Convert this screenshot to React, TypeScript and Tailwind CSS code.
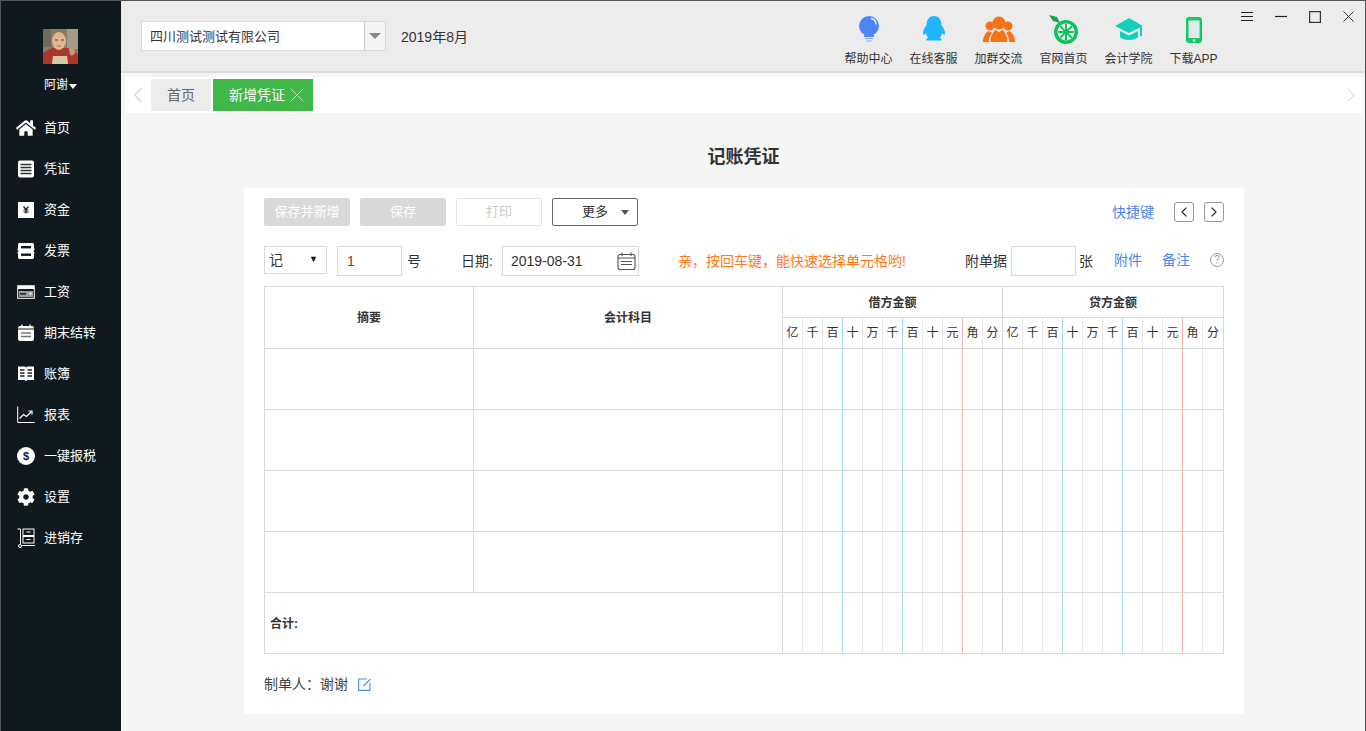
import { ChevronLeft, ChevronRight, X } from "lucide-react";
import { FaHome, FaCog } from "react-icons/fa";

const font = { fontFamily: '"Liberation Sans", "Noto Sans CJK SC", sans-serif' };

function Avatar() {
  return (
    <svg width="35" height="35" viewBox="0 0 35 35" className="block">
      <rect width="35" height="35" fill="#8a7a68" />
      <rect x="24" width="11" height="20" fill="#a49a8c" />
      <rect width="8" height="18" fill="#6e6a60" />
      <path d="M0 35V24l9-5h16l10 6v10z" fill="#a8392a" />
      <path d="M10 27h14l1 8H9z" fill="#d8c9a8" />
      <ellipse cx="16" cy="12" rx="7" ry="9" fill="#e2b595" />
      <path d="M26 20c3-2 6 0 6 3s-3 4-5 3z" fill="#c99678" />
      <path d="M12 11h3M18 11h3" stroke="#5a4030" strokeWidth="1" />
      <path d="M14 17h4" stroke="#a07058" strokeWidth="1" />
    </svg>
  );
}

const S = { width: 18, height: 18, viewBox: "0 0 18 18" };

const navIcons = {
  home: <FaHome size={20} color="#fff" className="shrink-0" />,
  voucher: (
    <svg {...S}>
      <rect x="1" y="0.5" width="16" height="17" rx="2" fill="#fff" />
      <path d="M3.5 4.5h11M3.5 7.5h11M3.5 10.5h11M3.5 13.5h11" stroke="#333" strokeWidth="1.6" />
    </svg>
  ),
  money: (
    <svg {...S}>
      <rect x="1" y="1" width="16" height="16" fill="#fff" />
      <path d="M6.5 5.5L9 8.5l2.5-3M6.5 9h5M6.5 11h5M9 8.5v4" stroke="#222" strokeWidth="1.2" fill="none" />
    </svg>
  ),
  invoice: (
    <svg {...S}>
      <path d="M2 1h14a2 2 0 0 1 1 2v3a2 2 0 0 1-1 3 2 2 0 0 1 1 3v3a2 2 0 0 1-1 2H2a2 2 0 0 1-1-2v-3a2 2 0 0 1 1-3 2 2 0 0 1-1-3V3a2 2 0 0 1 1-2z" fill="#fff" />
      <rect x="4" y="4" width="10" height="2.4" fill="#101a1e" />
      <rect x="4" y="11.5" width="10" height="2.4" fill="#101a1e" />
    </svg>
  ),
  salary: (
    <svg {...S}>
      <rect x="0.7" y="2.7" width="16.6" height="12.6" fill="none" stroke="#fff" strokeWidth="1" />
      <rect x="1" y="3" width="16" height="3" fill="#fff" />
      <rect x="2" y="8" width="14" height="6" fill="#9aa0a2" />
      <rect x="3" y="10" width="6" height="1.6" fill="#222" />
      <rect x="12.5" y="9.5" width="2" height="2" fill="#fff" />
    </svg>
  ),
  closing: (
    <svg {...S}>
      <rect x="1" y="2" width="16" height="15" rx="2" fill="#fff" />
      <path d="M5 0.500v3M13 0.500v3" stroke="#fff" strokeWidth="1.4" />
      <path d="M1 5h16" stroke="#101a1e" strokeWidth="1" />
      <path d="M4 9h10M4 12.500h10" stroke="#777" strokeWidth="1.6" />
    </svg>
  ),
  books: (
    <svg {...S}>
      <path d="M1 1.500h7l1 1 1-1h7v13.500h-7l-1 1.500-1-1.500H1z" fill="#fff" />
      <path d="M3 5h4.500M3 8h4.500M3 11h4.500M10.500 5H15M10.500 8H15M10.500 11H15" stroke="#222" strokeWidth="1.3" />
    </svg>
  ),
  report: (
    <svg {...S} fill="none">
      <path d="M0.700 0.500v16h17" stroke="#fff" strokeWidth="1" />
      <path d="M2.500 12.500l4-4 3 2 5-5" stroke="#fff" strokeWidth="1.2" />
      <path d="M11.500 5h3.500v3.500" stroke="#fff" strokeWidth="1.2" />
    </svg>
  ),
  tax: (
    <svg {...S}>
      <circle cx="9" cy="9" r="9" fill="#fff" />
      <text x="9" y="13" textAnchor="middle" fontSize="11" fontWeight="700" fill="#222" style={font}>$</text>
    </svg>
  ),
  settings: <FaCog size={18} color="#fff" className="shrink-0" />,
  stock: (
    <svg width="18" height="20" viewBox="0 0 18 20" fill="none" stroke="#fff" strokeWidth="1" className="shrink-0">
      <path d="M0.500 1h3v15.500" />
      <rect x="6" y="1" width="11" height="6.500" />
      <rect x="6" y="8.500" width="11" height="6.500" />
      <path d="M9.500 4h4M9.500 11.500h4" />
      <path d="M5 17.500h13" />
      <circle cx="3" cy="18" r="1.500" />
    </svg>
  ),
};

const navItems = [
  { label: "首页", icon: navIcons.home },
  { label: "凭证", icon: navIcons.voucher },
  { label: "资金", icon: navIcons.money },
  { label: "发票", icon: navIcons.invoice },
  { label: "工资", icon: navIcons.salary },
  { label: "期末结转", icon: navIcons.closing },
  { label: "账簿", icon: navIcons.books },
  { label: "报表", icon: navIcons.report },
  { label: "一键报税", icon: navIcons.tax },
  { label: "设置", icon: navIcons.settings },
  { label: "进销存", icon: navIcons.stock },
];

const I = { width: 32, height: 30, viewBox: "0 0 32 30" };

const topLinks = [
  {
    label: "帮助中心",
    icon: (
      <svg {...I}>
        <circle cx="16" cy="11" r="10" fill="#4f86f7" />
        <path d="M18 3.500c3 .6 5 3 5 6" stroke="#fff" strokeWidth="1.4" fill="none" opacity="0.85" />
        <path d="M11 20h10v2H11z" fill="#4f86f7" />
        <path d="M12 23.500h8M13.500 26h5" stroke="#7aa5f8" strokeWidth="1.2" />
      </svg>
    ),
  },
  {
    label: "在线客服",
    icon: (
      <svg {...I}>
        <path d="M16 1c5 0 7.500 4 7.500 9 2 3 4 6 3.500 9-.5 1.500-2 .5-3-1-.3 2-1 3.500-2.500 4.500 1.500.5 2.500 1.500 2 3H8.500c-.5-1.500.5-2.500 2-3C9 21.500 8.300 20 8 18c-1 1.500-2.500 2.500-3 1-.5-3 1.500-6 3.500-9C8.500 5 11 1 16 1z" fill="#1eb6ff" />
      </svg>
    ),
  },
  {
    label: "加群交流",
    icon: (
      <svg {...I}>
        <circle cx="16" cy="8" r="6.500" fill="#f97316" />
        <circle cx="7" cy="11" r="4.500" fill="#f97316" />
        <circle cx="25" cy="11" r="4.500" fill="#f97316" />
        <path d="M0 27c0-6 3-10 6-11l3 2c-2 2-3 5-3 9z" fill="#f97316" />
        <path d="M32 27c0-6-3-10-6-11l-3 2c2 2 3 5 3 9z" fill="#f97316" />
        <path d="M7.500 27c0-6 3-11 5-12l3.500 2 3.500-2c2 1 5 6 5 12z" fill="#f97316" />
      </svg>
    ),
  },
  {
    label: "官网首页",
    icon: (
      <svg {...I}>
        <path d="M1 0l8 2 3 6-7-2z" fill="#16a34a" />
        <circle cx="18" cy="17" r="12" fill="#0fc25c" />
        <circle cx="18" cy="17" r="8.500" fill="#fff" />
        <path d="M18 9v16M10 17h16M12.300 11.300l11.400 11.400M23.700 11.300L12.300 22.700" stroke="#0fc25c" strokeWidth="2" />
      </svg>
    ),
  },
  {
    label: "会计学院",
    icon: (
      <svg {...I}>
        <path d="M16 3L2 11l14 7 14-7z" fill="#14d0bb" />
        <path d="M7 16v6c3 4 15 4 18 0v-6l-9 4.500z" fill="#14d0bb" />
        <path d="M28 12v9" stroke="#14d0bb" strokeWidth="2" />
      </svg>
    ),
  },
  {
    label: "下载APP",
    icon: (
      <svg {...I}>
        <rect x="8" y="2" width="16" height="26" rx="3" fill="#12c869" />
        <rect x="10.500" y="5.500" width="11" height="17.500" fill="#ececec" />
        <rect x="10.500" y="5.500" width="11" height="17.500" fill="#bdf0d4" opacity="0.3" />
        <circle cx="16" cy="25.500" r="1.200" fill="#fff" />
      </svg>
    ),
  },
];

const digits = ["亿", "千", "百", "十", "万", "千", "百", "十", "元", "角", "分"];

// 金额格的竖线颜色：百/千后为蓝，元后为红
function lineClass(i: number) {
  if (i === 2 || i === 5) return "border-r-[#a6d8f7]";
  if (i === 8) return "border-r-[#f3b4b4]";
  if (i === 10) return "border-r-[#d9d9d9]";
  return "border-r-[#e8e8e8]";
}

function AmountCells({ head }: { head?: boolean }) {
  const cols = [...digits, ...digits];
  return (
    <>
      {cols.map((d, i) => (
        <div
          key={i}
          className={`flex items-center justify-center border-r last:border-r-0 ${lineClass(i % 11)} ${head ? "text-[12px] text-[#333]" : ""}`}
        >
          {head ? d : null}
        </div>
      ))}
    </>
  );
}

function CalendarIcon() {
  return (
    <svg width="19" height="19" viewBox="0 0 19 19" fill="none" stroke="#555" strokeWidth="1.100">
      <rect x="1" y="2.500" width="17" height="15" rx="2" />
      <path d="M5 0.500v3.500M14 0.500v3.500M1 6h17M4 9.500h11M4 12.500h11" />
    </svg>
  );
}

function EditIcon() {
  return (
    <svg width="13" height="13" viewBox="0 0 13 13" fill="none" stroke="#4a90e8" strokeWidth="1.100" className="ml-[10px]">
      <path d="M9 1H0.600v11.400H12V4.500" />
      <path d="M5.500 8L12.500 1" />
    </svg>
  );
}

function WindowControls() {
  return (
    <div className="ml-[15px] flex gap-[22px] pr-[10px] pt-[10px]">
      <svg width="12" height="12" viewBox="0 0 12 12" stroke="#222" strokeWidth="1.200">
        <path d="M0 1.500h12M0 5.500h12M0 9.500h12" />
      </svg>
      <svg width="12" height="12" viewBox="0 0 12 12" stroke="#222" strokeWidth="1.200">
        <path d="M0 5.500h12" />
      </svg>
      <svg width="12" height="12" viewBox="0 0 12 12" fill="none" stroke="#333" strokeWidth="1.200">
        <rect x="0.600" y="0.600" width="10.800" height="10.800" />
      </svg>
      <svg width="12" height="12" viewBox="0 0 12 12" stroke="#333" strokeWidth="1">
        <path d="M0.500 0.500l10 10M10.500 0.500l-10 10" />
      </svg>
    </div>
  );
}

export default function App() {
  const rowGrid = "grid grid-cols-[209px_309px_repeat(22,20px)]";
  return (
    <div style={font} className="flex h-[731px] w-[1366px] overflow-hidden border-x border-t border-[#555] bg-[#f5f5f5] text-[13px] text-[#333]">
      {/* Sidebar */}
      <aside className="flex w-[120px] shrink-0 flex-col bg-[#101a1e] text-white">
        <div className="flex flex-col items-center pt-[28px]">
          <div className="ml-[-1px]">
            <Avatar />
          </div>
          <div className="ml-[-1px] mt-[10px] flex h-[22px] items-center text-[12px] leading-none">
            阿谢
            <span className="ml-[1px] mt-[3px] h-0 w-0 border-x-[4.500px] border-t-[5px] border-x-transparent border-t-white" />
          </div>
        </div>
        <nav className="mt-[11px]">
          {navItems.map((it) => (
            <div key={it.label} className="flex h-[41px] items-center pl-[16px]">
              <span className="flex w-[18px] items-center justify-center">{it.icon}</span>
              <span className="ml-[9px]">{it.label}</span>
            </div>
          ))}
        </nav>
      </aside>

      <div className="flex min-w-0 flex-1 flex-col">
        {/* Top bar */}
        <header className="flex h-[72px] shrink-0 border-b-2 border-[#dcdcdc] bg-[#ececec]">
          <div className="flex items-start pl-[20px] pt-[20px]">
            <div className="flex h-[30px] w-[245px] border border-[#d9d9d9] bg-white">
              <div className="flex flex-1 items-center pl-[8px] pt-[2px] text-[#333]">四川测试测试有限公司</div>
              <div className="flex w-[21px] items-center justify-center border-l border-[#c9c9c9] bg-[#f5f5f5]">
                <span className="h-0 w-0 border-x-[6px] border-t-[6px] border-x-transparent border-t-[#888]" />
              </div>
            </div>
            <div className="ml-[15px] flex h-[30px] items-center pt-[3px] text-[14px]">2019年8月</div>
          </div>
          <div className="ml-auto flex items-start">
            <div className="flex pt-[14px]">
              {topLinks.map((l) => (
                <div key={l.label} className="flex w-[65px] flex-col items-center">
                  <div className="flex h-[30px] items-center justify-center">{l.icon}</div>
                  <div className="mt-[6px] text-[12px] leading-[16px] text-[#333]">{l.label}</div>
                </div>
              ))}
            </div>
            <WindowControls />
          </div>
        </header>

        {/* Tabs */}
        <div className="ml-[4px] mr-[2px] mt-[4px] flex h-[36px] shrink-0 items-center bg-white text-[14px]">
          <div className="flex w-[26px] items-center justify-center">
            <ChevronLeft size={26} strokeWidth={1} color="#d5d5d5" />
          </div>
          <div className="flex h-[32px] w-[60px] items-center justify-center bg-[#ececec] text-[#666]">首页</div>
          <div className="ml-[2px] flex h-[32px] w-[100px] items-center bg-[#41b649] pl-[16px] text-white">
            新增凭证
            <X size={24} strokeWidth={0.800} className="text-[#d7f0d9]" />
          </div>
          <div className="ml-auto flex w-[24px] items-center justify-center">
            <ChevronRight size={26} strokeWidth={1} color="#d5d5d5" />
          </div>
        </div>

        {/* Page */}
        <main className="flex flex-1 flex-col items-center">
          <h1 className="ml-[1px] mt-[31px] h-[26px] text-[18px] font-bold leading-[26px] text-[#333]">记账凭证</h1>
          <div className="ml-[2px] mt-[18px] h-[526px] w-[1000px] bg-white px-[20px] pt-[10px]">
            {/* Toolbar */}
            <div className="flex h-[28px] items-center">
              <button className="h-[28px] w-[86px] rounded-[2px] bg-[#d9d9d9] text-[13px] text-white">保存并新增</button>
              <button className="ml-[10px] h-[28px] w-[86px] rounded-[2px] bg-[#d9d9d9] text-[13px] text-white">保存</button>
              <button className="ml-[10px] h-[28px] w-[86px] rounded-[2px] border border-[#e5e5e5] text-[13px] text-[#c8c8c8]">打印</button>
              <button className="relative ml-[10px] h-[28px] w-[86px] rounded-[2px] border border-[#666] text-[13px] text-[#333]">
                更多
                <span className="absolute right-[8px] top-[11px] h-0 w-0 border-x-[4px] border-t-[5px] border-x-transparent border-t-[#555]" />
              </button>
              <span className="ml-auto text-[14px] text-[#4a86f0]">快捷键</span>
              <span className="ml-[20px] flex h-[20px] w-[20px] items-center justify-center rounded-[3px] border border-[#999]">
                <ChevronLeft size={16} strokeWidth={1.800} color="#333" />
              </span>
              <span className="ml-[10px] flex h-[20px] w-[20px] items-center justify-center rounded-[3px] border border-[#999]">
                <ChevronRight size={16} strokeWidth={1.800} color="#333" />
              </span>
            </div>

            {/* Form row */}
            <div className="mt-[20px] flex h-[30px] items-start text-[14px]">
              <div className="flex h-[28px] w-[63px] items-center justify-between border border-[#d9d9d9] pl-[4px] pr-[8px]">
                记<span className="text-[9px] text-[#111]">▼</span>
              </div>
              <div className="ml-[10px] flex h-[30px] w-[65px] items-center border border-[#d9d9d9] pl-[9px] text-[#8c3b2e]">1</div>
              <span className="ml-[5px] flex h-[30px] items-center">号</span>
              <span className="ml-[40px] flex h-[30px] w-[32px] items-center whitespace-nowrap">日期:</span>
              <div className="ml-[9px] flex h-[30px] w-[137px] items-center justify-between border border-[#d9d9d9] pl-[8px] pr-[2px]">
                2019-08-31
                <CalendarIcon />
              </div>
              <span className="ml-[39px] flex h-[30px] items-center whitespace-nowrap text-[#ff7a1a]">亲，按回车键，能快速选择单元格哟!</span>
              <span className="ml-[59px] flex h-[30px] items-center">附单据</span>
              <div className="ml-[4px] h-[30px] w-[65px] border border-[#d9d9d9]" />
              <span className="ml-[3px] flex h-[30px] items-center">张</span>
              <span className="ml-[21px] flex h-[28px] items-center text-[#4a86f0]">附件</span>
              <span className="ml-[20px] flex h-[28px] items-center text-[#4a86f0]">备注</span>
              <span className="ml-auto mt-[7px] flex h-[14px] w-[14px] items-center justify-center rounded-full border border-[#999] text-[10px] leading-none text-[#999]">?</span>
            </div>

            {/* Table */}
            <div className="mt-[10px] w-[960px] border border-[#d9d9d9]">
              <div className={`${rowGrid} h-[62px] border-b border-[#d9d9d9] text-[12px] font-bold`}>
                <div className="row-span-2 flex items-center justify-center border-r border-[#d9d9d9]">摘要</div>
                <div className="row-span-2 flex items-center justify-center border-r border-[#d9d9d9]">会计科目</div>
                <div className="col-span-11 flex h-[31px] items-center justify-center border-b border-r border-[#d9d9d9] pt-[1px]">借方金额</div>
                <div className="col-span-11 flex h-[31px] items-center justify-center border-b border-[#d9d9d9] pt-[1px]">贷方金额</div>
                <div className="col-span-22 grid h-[30px] grid-cols-[repeat(22,20px)] font-normal">
                  <AmountCells head />
                </div>
              </div>
              {[0, 1, 2, 3].map((r) => (
                <div key={r} className={`${rowGrid} h-[61px] border-b border-[#d9d9d9]`}>
                  <div className="border-r border-[#d9d9d9]" />
                  <div className="border-r border-[#d9d9d9]" />
                  <AmountCells />
                </div>
              ))}
              <div className="grid h-[60px] grid-cols-[518px_repeat(22,20px)]">
                <div className="flex items-center border-r border-[#d9d9d9] pl-[5px] pt-[1px] text-[12px] font-bold">合计:</div>
                <AmountCells />
              </div>
            </div>

            {/* Footer */}
            <div className="mt-[20px] flex items-center text-[14px] text-[#444]">
              制单人：<span>谢谢</span>
              <EditIcon />
            </div>
          </div>
        </main>
      </div>
    </div>
  );
}
